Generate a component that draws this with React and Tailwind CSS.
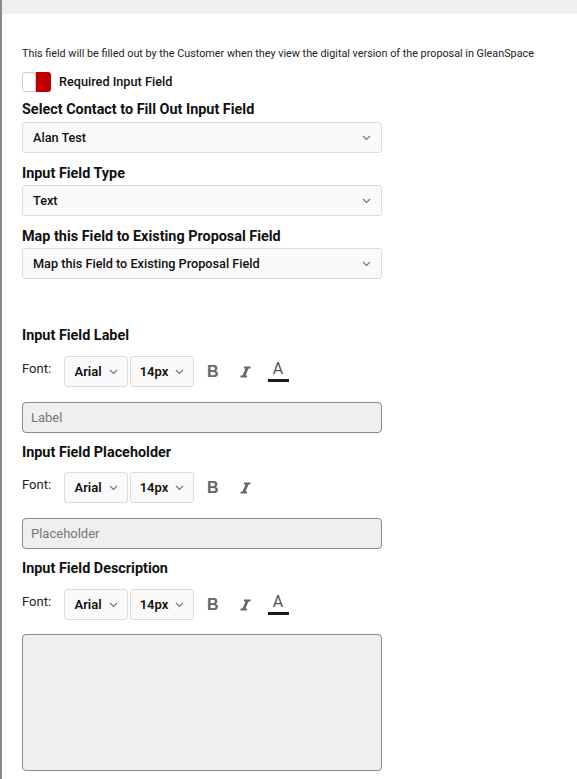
import React from "react";

const Chevron = () => (
  <svg width="9" height="6" viewBox="0 0 9 6">
    <path d="M1 1l3.5 3.5L8 1" fill="none" stroke="#777" strokeWidth="1.2" />
  </svg>
);

const Select = ({ value }) => (
  <div className="flex h-[31px] w-[360px] items-center justify-between rounded-[3px] border border-[#dcdcdc] bg-[#fafafa] pl-[10px] pr-[10px]">
    <span className="text-[12.7px] font-medium text-[#111]">{value}</span>
    <Chevron />
  </div>
);

const ItalicIcon = () => (
  <svg width="11" height="12" viewBox="0 0 11 12">
    <path d="M4 0.5h6.5v2H4z M0.5 9.5H7v2H0.5z M6 1.5h3L5 10.5H2z" fill="#666" />
  </svg>
);

const FontRow = ({ color = true }) => (
  <div className="flex items-center">
    <span className="w-[42px] -mt-[6px] text-[13px] text-[#222]">Font:</span>
    <div className="flex h-[31px] w-[64px] items-center justify-center gap-[7px] rounded-[3px] border border-[#dcdcdc] bg-[#fafafa]">
      <span className="text-[13px] font-semibold text-[#111]">Arial</span>
      <Chevron />
    </div>
    <div className="ml-[2px] flex h-[31px] w-[64px] items-center justify-center gap-[7px] rounded-[3px] border border-[#dcdcdc] bg-[#fafafa]">
      <span className="text-[13px] font-semibold text-[#111]">14px</span>
      <Chevron />
    </div>
    <span className="ml-[13px] text-[16px] font-bold leading-none text-[#666]" style={{ fontFamily: "'Liberation Sans', Arial, sans-serif" }}>B</span>
    <span className="ml-[21px] flex items-center"><ItalicIcon /></span>
    {color && (
      <span className="ml-[17px] flex flex-col items-center">
        <span className="text-[16px] leading-[16px] text-[#555]">A</span>
        <span className="mt-[2px] h-[3px] w-[21px] bg-[#1a1a1a]" />
      </span>
    )}
  </div>
);

const Heading = ({ children, className = "" }) => (
  <div className={`text-[14.4px] font-bold leading-[18px] text-[#111] ${className}`}>{children}</div>
);

export default function App() {
  return (
    <div className="min-h-[779px] w-[577px] border-l-[2px] border-[#8a8a8a] bg-white" style={{ fontFamily: "Roboto, 'Noto Sans', sans-serif" }}>
      <div className="h-[14px] bg-[#efefef]" />
      <div className="pl-[20px]">
        <div className="mt-[32px] text-[10.8px] leading-[16px] text-[#222]">
          This field will be filled out by the Customer when they view the digital version of the proposal in GleanSpace
        </div>
        <div className="mt-[10px] flex items-center">
          <div className="flex h-[20px] w-[29px] overflow-hidden rounded-[3px]">
            <div className="h-full w-[14px] rounded-l-[3px] border border-[#ccc] bg-white" />
            <div className="h-full w-[15px] bg-[#c00000]" />
          </div>
          <span className="ml-[8px] text-[12.7px] font-medium text-[#111]">Required Input Field</span>
        </div>
        <Heading className="mt-[9px]">Select Contact to Fill Out Input Field</Heading>
        <div className="mt-[3px]"><Select value="Alan Test" /></div>
        <Heading className="mt-[12px]">Input Field Type</Heading>
        <div className="mt-[2px]"><Select value="Text" /></div>
        <Heading className="mt-[12px]">Map this Field to Existing Proposal Field</Heading>
        <div className="mt-[2px]"><Select value="Map this Field to Existing Proposal Field" /></div>

        <Heading className="mt-[48px]">Input Field Label</Heading>
        <div className="mt-[11px]"><FontRow /></div>
        <div className="mt-[15px] flex h-[31px] w-[360px] items-center rounded-[4px] border border-[#8a8a8a] bg-[#efefef] px-[8px] text-[13px] text-[#777]">Label</div>

        <Heading className="mt-[11px]">Input Field Placeholder</Heading>
        <div className="mt-[10px]"><FontRow color={false} /></div>
        <div className="mt-[15px] flex h-[31px] w-[360px] items-center rounded-[4px] border border-[#8a8a8a] bg-[#efefef] px-[8px] text-[13px] text-[#777]">Placeholder</div>

        <Heading className="mt-[11px]">Input Field Description</Heading>
        <div className="mt-[11px]"><FontRow /></div>
        <div className="mt-[14px] h-[137px] w-[360px] rounded-[4px] border border-[#8a8a8a] bg-[#efefef]" />
      </div>
    </div>
  );
}
